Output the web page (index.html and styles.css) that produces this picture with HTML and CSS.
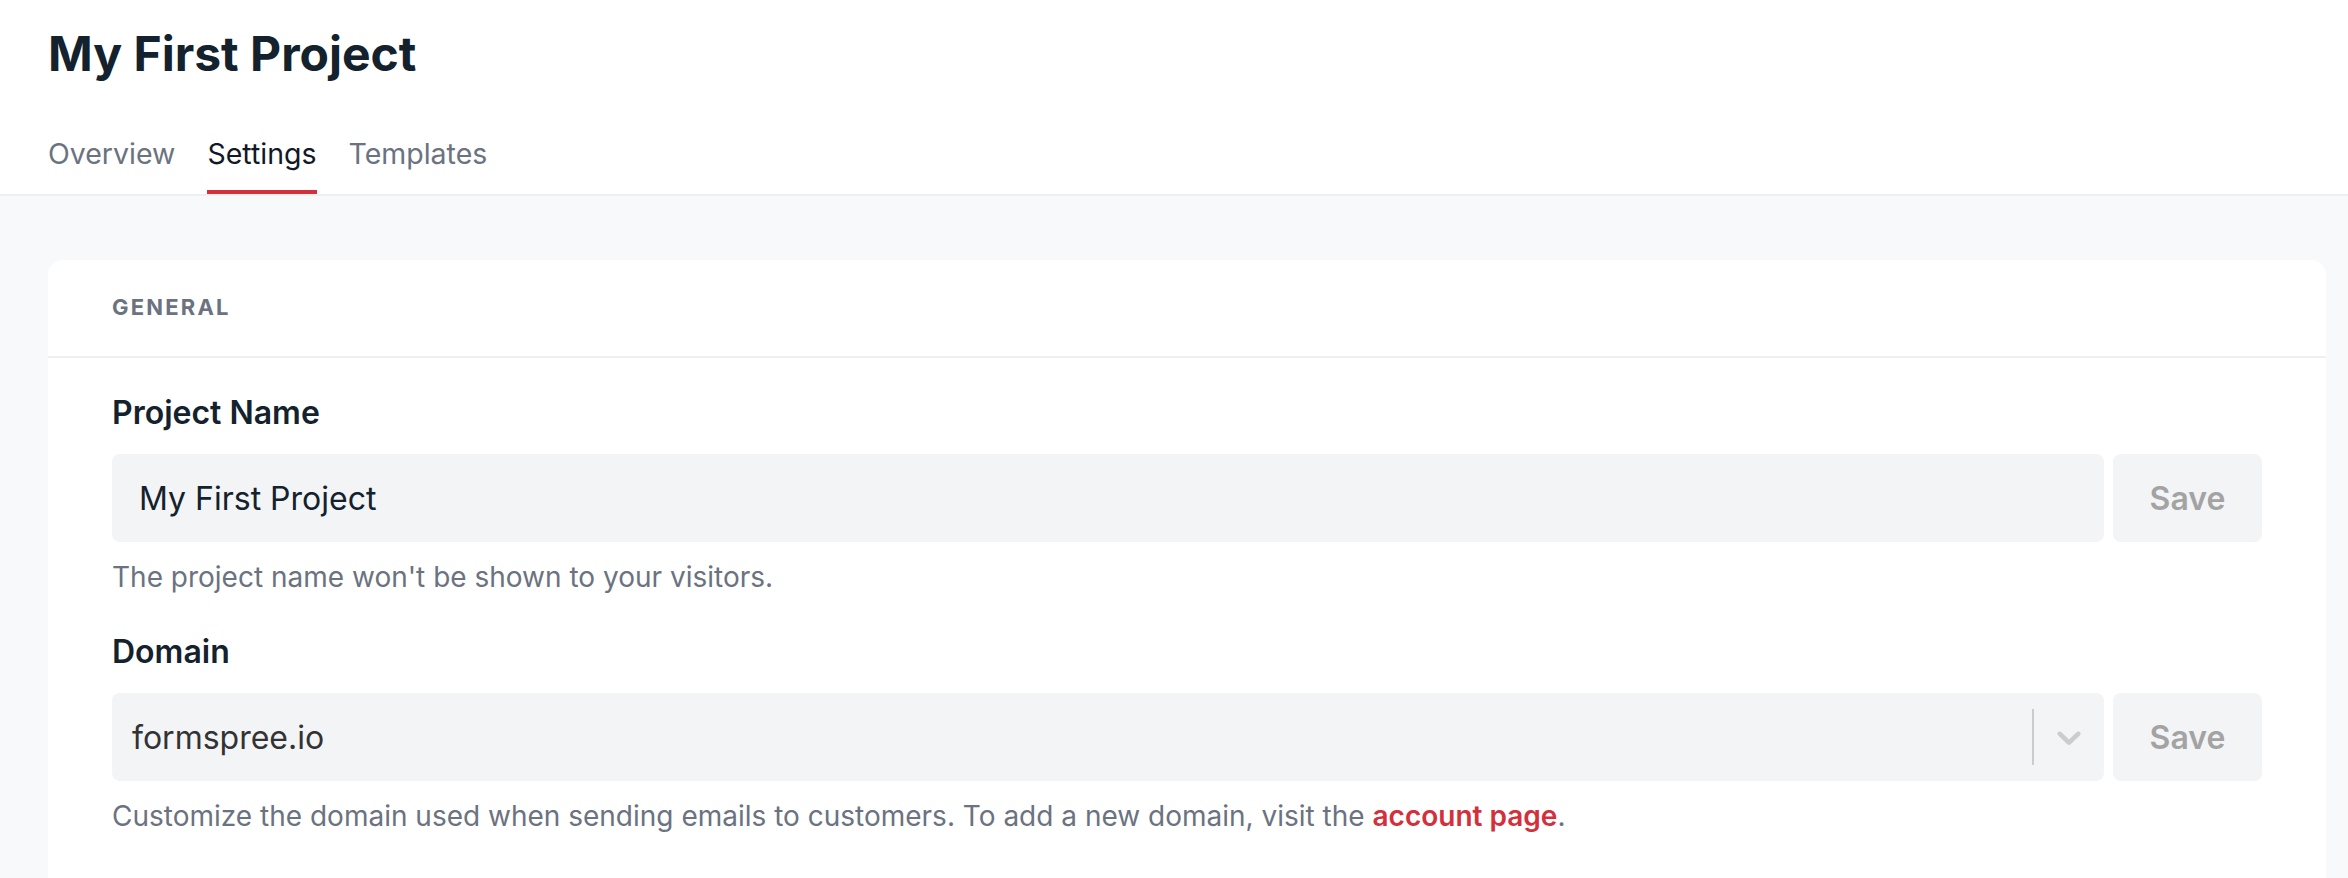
FILE: index.html
```html
<!DOCTYPE html>
<html lang="en">
<head>
    <meta charset="UTF-8">
    <meta name="viewport" content="width=device-width, initial-scale=1.0">
    <title>My First Project - Settings</title>
    <link rel="stylesheet" href="styles.css">
</head>
<body>

    <header class="top">
        <h1 class="project-title">My First Project</h1>
        <nav class="tabs">
            <a class="tab" href="#">Overview</a>
            <a class="tab active" href="#">Settings</a>
            <a class="tab" href="#">Templates</a>
        </nav>
    </header>

    <main class="page">
        <section class="card">
            <div class="card-head">General</div>

            <div class="card-body">
                <div class="field">
                    <label class="field-label" for="project-name">Project Name</label>
                    <div class="field-row">
                        <input class="text-input" id="project-name" type="text" value="My First Project">
                        <button class="save-btn" disabled>Save</button>
                    </div>
                    <p class="hint">The project name won't be shown to your visitors.</p>
                </div>

                <div class="field">
                    <div class="field-label">Domain</div>
                    <div class="field-row">
                        <div class="select">
                            <div class="select-value">formspree.io</div>
                            <span class="select-sep"></span>
                            <div class="select-arrow">
                                <!-- chevron -->
                                <svg width="40" height="40" viewBox="0 0 20 20" aria-hidden="true">
                                    <path d="M4.516 7.548c0.436-0.446 1.043-0.481 1.576 0l3.908 3.747 3.908-3.747c0.533-0.481 1.141-0.446 1.574 0 0.436 0.445 0.408 1.197 0 1.615-0.406 0.418-4.695 4.502-4.695 4.502-0.217 0.223-0.502 0.335-0.787 0.335s-0.57-0.112-0.789-0.335c0 0-4.287-4.084-4.695-4.502s-0.436-1.17 0-1.615z"></path>
                                </svg>
                            </div>
                        </div>
                        <button class="save-btn" disabled>Save</button>
                    </div>
                    <p class="hint">Customize the domain used when sending emails to customers. To add a new domain, visit the <a class="link" href="#">account page</a>.</p>
                </div>
            </div>
        </section>
    </main>

</body>
</html>
```

FILE: styles.css
```css
body {
    margin: 0;
    background-color: #f8f9fa;
    font-family: Inter, "Noto Sans", sans-serif;
    color: #13222c;
}

/* ヘッダー部分 */
.top {
    background-color: #fff;
    padding: 24px 48px 0;
    border-bottom: 2px solid #eeeff1;
}

.project-title {
    margin: 0;
    font-size: 48px;
    line-height: 60px;
    font-weight: 700;
    color: #13222c;
}

.tabs {
    display: flex;
    gap: 32px;
    margin-top: 50px;
}

.tab {
    font-size: 28.5px;
    line-height: 40px;
    padding-bottom: 16px;
    border-bottom: 4px solid transparent;
    color: #6b7280;
    text-decoration: none;
}

.tab.active {
    color: #111827;
    border-bottom-color: #d3303c;
}

/* 本体 */
.page {
    padding: 64px 22px 0 48px;
}

.card {
    background-color: #fff;
    border-radius: 15px 15px 0 0;
}

.card-head {
    padding: 31px 64px 33px;
    border-bottom: 2px solid #eeeff1;
    font-size: 22px;
    line-height: 32px;
    font-weight: 700;
    letter-spacing: 0.1em;
    text-transform: uppercase;
    color: #6b7280;
}

.card-body {
    padding: 35px 64px 44px;
}

.field + .field {
    margin-top: 37px;
}

.field-label {
    display: block;
    font-size: 32px;
    line-height: 40px;
    font-weight: 600;
    color: #13222c;
    margin-bottom: 21px;
}

.field-row {
    display: flex;
    gap: 9px;
}

.text-input {
    flex: 1;
    height: 88px;
    box-sizing: border-box;
    border: none;
    border-radius: 8px;
    background-color: #f3f4f6;
    padding: 0 27px;
    font-family: inherit;
    font-size: 32px;
    color: #13222c;
    outline: none;
}

.save-btn {
    width: 149px;
    height: 88px;
    border: none;
    border-radius: 8px;
    background-color: #f3f4f6;
    font-family: inherit;
    font-size: 32px;
    font-weight: 600;
    color: #a3a3a3;
}

/* ドロップダウン */
.select {
    flex: 1;
    height: 88px;
    display: flex;
    align-items: center;
    border-radius: 8px;
    background-color: #f3f4f6;
}

.select-value {
    flex: 1;
    padding-left: 20px;
    font-size: 32px;
    color: #333;
}

.select-sep {
    align-self: stretch;
    width: 2px;
    margin: 16px 0;
    background-color: #cccccc;
}

.select-arrow {
    display: flex;
    align-items: center;
    padding: 0 15px;
}

.select-arrow svg {
    fill: #cccccc;
    display: block;
}

.hint {
    margin: 17px 0 0;
    font-size: 28px;
    line-height: 36px;
    color: #6b7280;
}

.link {
    color: #d3303c;
    font-weight: 600;
    text-decoration: none;
}
```
